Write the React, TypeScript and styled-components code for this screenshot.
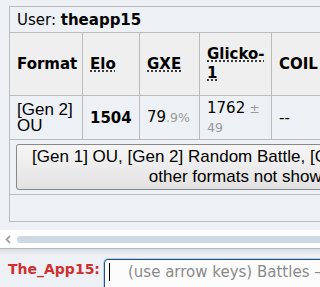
import React from "react";
import styled, { createGlobalStyle } from "styled-components";

const Global = createGlobalStyle`
  html, body { margin: 0; padding: 0; }
  body { background: #edf1f5; overflow: hidden; }
`;

const Page = styled.div`
  width: 320px;
  height: 287px;
  overflow: hidden;
  display: flex;
  flex-direction: column;
  background: #edf1f5;
  font-family: "DejaVu Sans", Verdana, sans-serif;
  color: #000;
`;

const LadderPane = styled.div`
  height: 230px;
  flex: none;
  box-sizing: border-box;
  padding: 6px 0 0 9px;
  overflow: hidden;
`;

const Table = styled.table`
  border-collapse: collapse;
  table-layout: fixed;
  width: 502px;
  font-size: 15px;
`;

const Cell = styled.td<{ $h?: number }>`
  border: 1px solid #bbb;
  padding: 0 6px 0 7px;
  vertical-align: middle;
  line-height: 18px;
  height: ${(p) => (p.$h ? `${p.$h}px` : "auto")};
  white-space: normal;
`;

const HeadCell = styled.th`
  border: 1px solid #bbb;
  background: #efefef;
  padding: 0 4px 0 7px;
  text-align: left;
  vertical-align: middle;
  line-height: 19px;
  height: 62px;
  font-weight: bold;
`;

const FormatCell = styled(Cell)`
  font-family: "Liberation Sans", Arial, sans-serif;
  font-size: 17px;
  line-height: 16px;
`;

const ButtonCell = styled.td`
  border: 1px solid #bbb;
  padding: 4px 6px;
`;

const Abbr = styled.abbr`
  text-decoration: underline dotted;
  text-underline-offset: 2px;
  cursor: help;
`;

const Dim = styled.small`
  font-size: 12.5px;
  color: #999;
`;

const FormatsButton = styled.button`
  display: block;
  box-sizing: border-box;
  width: 448px;
  padding: 2px 12px;
  border: 1px solid #888;
  border-radius: 3px;
  background: linear-gradient(#f6f6f6, #e2e2e2);
  font-family: "Liberation Sans", Arial, sans-serif;
  font-size: 17px;
  line-height: 20px;
  color: #000;
  text-align: center;
`;

const ScrollTrack = styled.div`
  height: 18px;
  flex: none;
  background: #fff;
  display: flex;
  align-items: center;
  padding-left: 5px;
  gap: 6px;
`;

const Thumb = styled.div`
  flex: 1;
  height: 7px;
  border-radius: 4px 0 0 4px;
  background: #cdd8e2;
`;

const ChatBar = styled.div`
  flex: 1;
  border-top: 1px solid #b4b9bf;
  background: linear-gradient(#d9dde2, #edf1f5 6px);
  display: flex;
  align-items: flex-start;
  padding: 10px 0 0 8px;
  gap: 4px;
`;

const UserName = styled.span`
  margin-top: 2px;
  font-weight: bold;
  font-size: 14px;
  line-height: 16px;
  color: #cf2f2f;
  white-space: nowrap;
`;

const TextBox = styled.div`
  flex: none;
  width: 260px;
  height: 40px;
  box-sizing: border-box;
  border: 1px solid #234e80;
  border-radius: 4px;
  box-shadow: 0 0 0 1px #b9d0ea;
  background: #fcfcfd;
  padding: 3px 0 0 4px;
  display: flex;
  align-items: flex-start;
  white-space: nowrap;
  overflow: hidden;
`;

const Caret = styled.span`
  width: 1px;
  height: 18px;
  background: #000;
  flex: none;
`;

const Placeholder = styled.span`
  margin-left: 18px;
  font-size: 15px;
  line-height: 18px;
  color: #8a8a8a;
`;

export default function App() {
  return (
    <Page>
      <Global />
      <LadderPane>
        <Table>
          <colgroup>
            <col style={{ width: 73 }} />
            <col style={{ width: 57 }} />
            <col style={{ width: 60 }} />
            <col style={{ width: 72 }} />
            <col style={{ width: 80 }} />
            <col style={{ width: 50 }} />
            <col style={{ width: 50 }} />
            <col style={{ width: 60 }} />
          </colgroup>
          <tbody>
            <tr>
              <Cell colSpan={8} $h={25}>
                User: <strong>theapp15</strong>
              </Cell>
            </tr>
            <tr>
              <HeadCell>Format</HeadCell>
              <HeadCell>
                <Abbr title="Elo rating">Elo</Abbr>
              </HeadCell>
              <HeadCell>
                <Abbr title="user's percentage chance of winning a random battle">GXE</Abbr>
              </HeadCell>
              <HeadCell>
                <Abbr title="Glicko-1 rating system: rating±deviation">Glicko-1</Abbr>
              </HeadCell>
              <HeadCell>COIL</HeadCell>
              <HeadCell>W</HeadCell>
              <HeadCell>L</HeadCell>
              <HeadCell>Total</HeadCell>
            </tr>
            <tr>
              <FormatCell $h={43}>[Gen 2] OU</FormatCell>
              <Cell>
                <strong>1504</strong>
              </Cell>
              <Cell>
                79<Dim>.9%</Dim>
              </Cell>
              <Cell>
                1762<Dim> ± 49</Dim>
              </Cell>
              <Cell>--</Cell>
              <Cell>27</Cell>
              <Cell>7</Cell>
              <Cell>34</Cell>
            </tr>
            <tr>
              <ButtonCell colSpan={8}>
                <FormatsButton>
                  [Gen 1] OU, [Gen 2] Random Battle, [Gen 3] OU, and 5 other formats not shown
                </FormatsButton>
              </ButtonCell>
            </tr>
            <tr>
              <Cell colSpan={8} $h={26}></Cell>
            </tr>
          </tbody>
        </Table>
      </LadderPane>
      <ScrollTrack>
        <svg width="6" height="9" viewBox="0 0 6 9" aria-hidden="true">
          <path d="M5 1 L1.5 4.5 L5 8" fill="none" stroke="#a3a3a3" strokeWidth="1.8" />
        </svg>
        <Thumb />
      </ScrollTrack>
      <ChatBar>
        <UserName>The_App15:</UserName>
        <TextBox>
          <Caret />
          <Placeholder>(use arrow keys) Battles – Chat</Placeholder>
        </TextBox>
      </ChatBar>
    </Page>
  );
}
